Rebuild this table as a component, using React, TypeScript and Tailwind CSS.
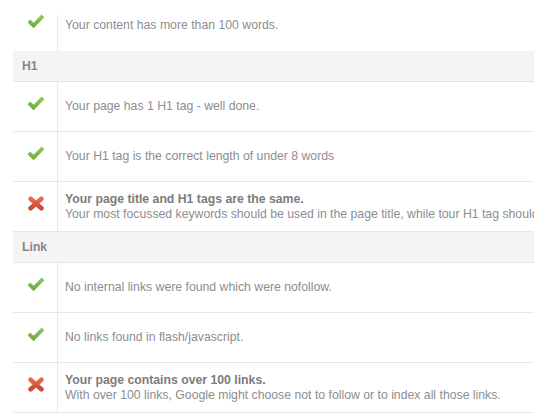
import React from 'react';

type Item = {
  ok: boolean;
  title?: string;
  text: string;
};

type Section = {
  heading?: string;
  items: Item[];
};

const sections: Section[] = [
  {
    items: [{ ok: true, text: 'Your content has more than 100 words.' }],
  },
  {
    heading: 'H1',
    items: [
      { ok: true, text: 'Your page has 1 H1 tag - well done.' },
      { ok: true, text: 'Your H1 tag is the correct length of under 8 words' },
      {
        ok: false,
        title: 'Your page title and H1 tags are the same.',
        text: 'Your most focussed keywords should be used in the page title, while tour H1 tag should describe the content of the page.',
      },
    ],
  },
  {
    heading: 'Link',
    items: [
      { ok: true, text: 'No internal links were found which were nofollow.' },
      { ok: true, text: 'No links found in flash/javascript.' },
      {
        ok: false,
        title: 'Your page contains over 100 links.',
        text: 'With over 100 links, Google might choose not to follow or to index all those links.',
      },
    ],
  },
];

function CheckIcon() {
  return (
    <svg width="18" height="15" viewBox="0 0 18 15">
      <defs>
        <linearGradient id="chk" x1="0" y1="0" x2="0" y2="1">
          <stop offset="0" stopColor="#8fcb5e" />
          <stop offset="1" stopColor="#6aa93c" />
        </linearGradient>
      </defs>
      <path d="M0.5 8.2 L3.2 5.6 L6.6 8.8 L14.6 0.6 L17.4 3.3 L6.6 14.2 Z" fill="url(#chk)" />
    </svg>
  );
}

function CrossIcon() {
  return (
    <svg width="16" height="15" viewBox="0 0 16 15">
      <defs>
        <linearGradient id="crs" x1="0" y1="0" x2="0" y2="1">
          <stop offset="0" stopColor="#ea6b50" />
          <stop offset="1" stopColor="#c84a33" />
        </linearGradient>
      </defs>
      <path
        d="M2.6 2.8 L13.4 12.2 M13.4 2.8 L2.6 12.2"
        stroke="url(#crs)"
        strokeWidth="4.6"
        strokeLinecap="round"
        fill="none"
      />
    </svg>
  );
}

function Row({ item, first }: { item: Item; first?: boolean }) {
  return (
    <div className={`flex ${first ? 'h-[51px]' : 'h-[50px] border-b border-[#e8e8e8]'}`}>
      <div className="w-[44px] shrink-0 flex justify-center pt-[14px] pl-[2px]">
        {item.ok ? <CheckIcon /> : <CrossIcon />}
      </div>
      <div
        className={`flex-1 min-w-0 border-l border-[#e8e8e8] pl-[7px] flex flex-col justify-center overflow-hidden whitespace-nowrap text-[12.25px] leading-[15px] text-[#8d8d8f] ${first ? 'mt-[15px] pb-[15px]' : ''}`}
      >
        {item.title && <div className="font-bold text-[#7c7c7c]">{item.title}</div>}
        <div>{item.text}</div>
      </div>
    </div>
  );
}

export default function App() {
  return (
    <div
      className="bg-white w-[548px] h-[417px] overflow-hidden pl-[13px]"
      style={{ fontFamily: '"Liberation Sans", Arial, sans-serif' }}
    >
      <div className="w-[521px]">
        {sections.map((section, si) => (
          <div key={si}>
            {section.heading && (
              <div className="h-[31px] bg-[#f4f4f4] border-b border-[#e4e4e4] flex items-center pl-[9px] text-[12.25px] font-bold text-[#868686]">
                {section.heading}
              </div>
            )}
            {section.items.map((item, i) => (
              <Row key={i} item={item} first={si === 0 && i === 0} />
            ))}
          </div>
        ))}
      </div>
    </div>
  );
}
